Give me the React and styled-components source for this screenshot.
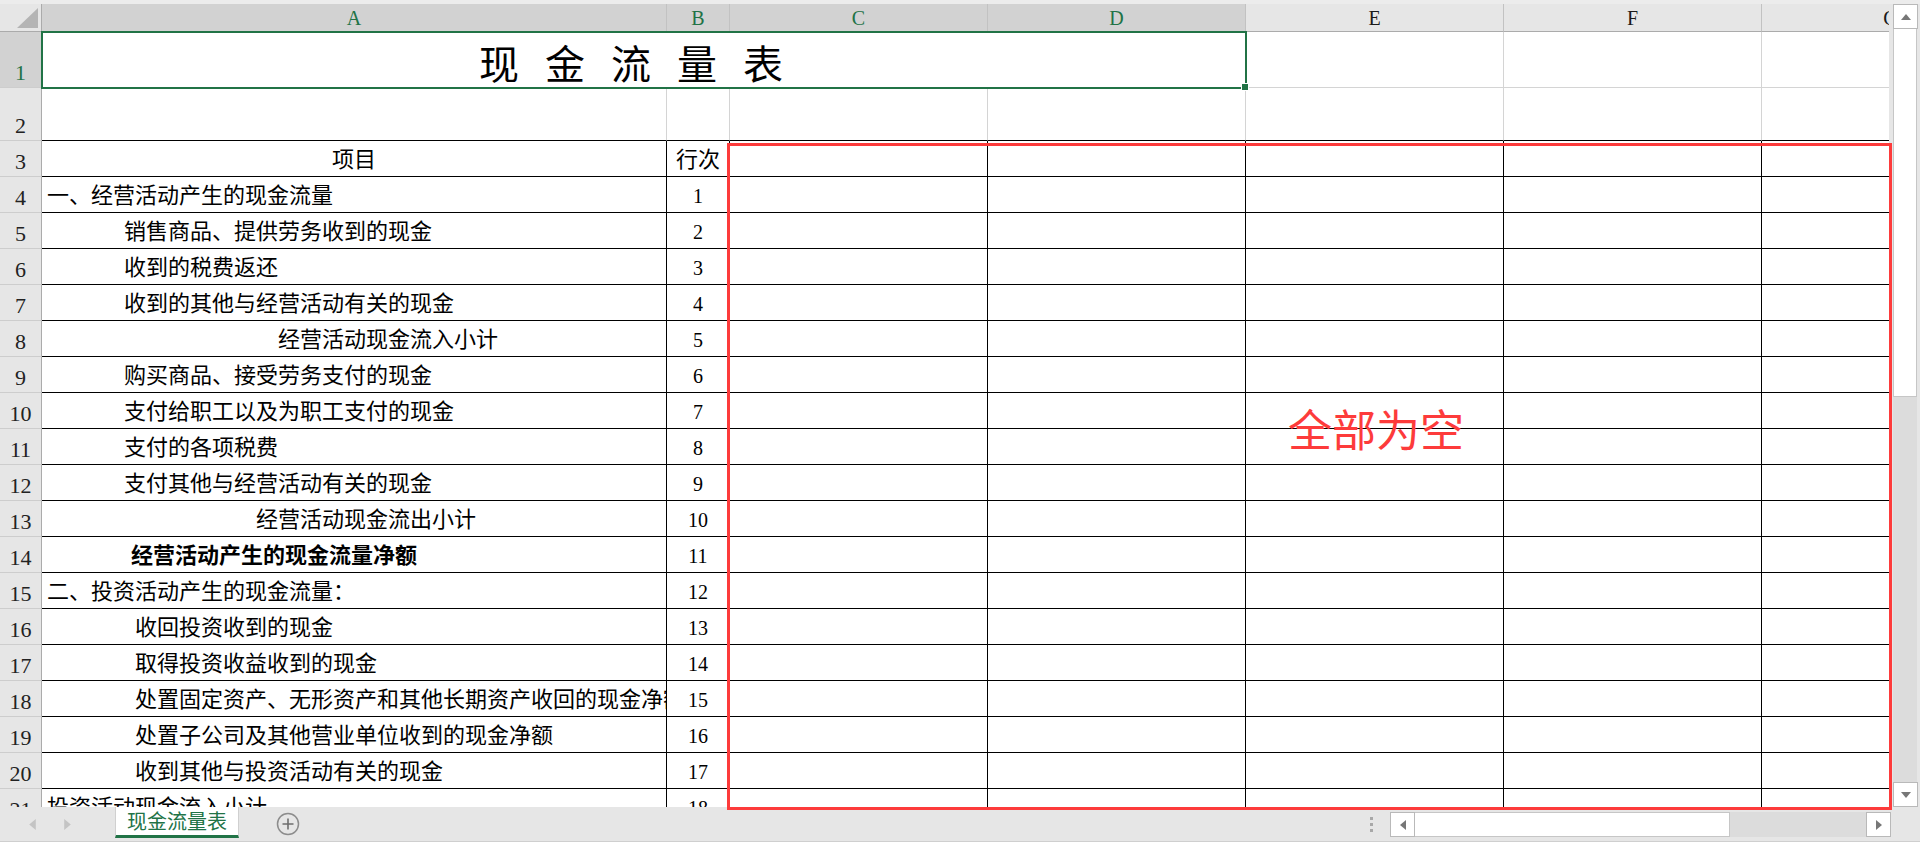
import React from 'react';
import styled, { createGlobalStyle } from 'styled-components';

const GREEN = '#217346';
const RED = '#fd3b3b';
const GRID = '#d4d4d4';

const GlobalStyle = createGlobalStyle`
  html, body {
    margin: 0;
    padding: 0;
    background: #ffffff;
    overflow: hidden;
  }
  body {
    font-family: "Liberation Serif", "Noto Sans CJK SC", serif;
  }
`;

const Page = styled.div`
  position: relative;
  width: 1920px;
  height: 842px;
  display: flex;
  flex-direction: column;
  background: #e6e6e6;
  overflow: hidden;
`;

const TopStrip = styled.div`
  flex: none;
  height: 4px;
  background: #ececec;
`;

const Main = styled.div`
  flex: none;
  display: flex;
  height: 803px;
`;

const Viewport = styled.div`
  flex: none;
  width: 1889px;
  height: 100%;
  overflow: hidden;
  background: #ffffff;
`;

const Sheet = styled.div`
  display: grid;
  grid-template-columns: 42px 625px 63px 258px 258px 258px 258px 258px;
  grid-template-rows: 28px 56px 53px repeat(19, 36px);
`;

const Corner = styled.div`
  position: relative;
  background: #e6e6e6;
  border-right: 1px solid #ababab;
  border-bottom: 1px solid #ababab;
  box-sizing: border-box;

  &::after {
    content: '';
    position: absolute;
    right: 3px;
    bottom: 3px;
    width: 0;
    height: 0;
    border-left: 21px solid transparent;
    border-bottom: 20px solid #b4b4b4;
  }
`;

const ColHead = styled.div`
  display: flex;
  align-items: flex-end;
  justify-content: center;
  padding-bottom: 3px;
  box-sizing: border-box;
  background: ${({ $selected }) => ($selected ? '#d2d2d2' : '#e6e6e6')};
  color: ${({ $selected }) => ($selected ? GREEN : '#1a1a1a')};
  border-right: 1px solid #c2c2c2;
  border-bottom: 1px solid #ababab;
  font-family: "Liberation Serif", serif;
  font-size: 20px;
  line-height: 1;
`;

const RowHead = styled.div`
  display: flex;
  align-items: flex-end;
  justify-content: center;
  padding-bottom: 3px;
  box-sizing: border-box;
  background: ${({ $selected }) => ($selected ? '#d2d2d2' : '#e6e6e6')};
  color: ${({ $selected }) => ($selected ? GREEN : '#222222')};
  border-right: 1px solid #ababab;
  border-bottom: 1px solid #cdcdcd;
  font-family: "Liberation Serif", serif;
  font-size: 22px;
  line-height: 1;
`;

const Cell = styled.div`
  display: flex;
  align-items: center;
  justify-content: ${({ $align }) => $align || 'flex-start'};
  padding-left: ${({ $indent }) => ($indent ? `${$indent}px` : '0')};
  padding-top: 3px;
  box-sizing: border-box;
  min-width: 0;
  overflow: hidden;
  white-space: nowrap;
  border-right: 1px solid ${({ $right }) => $right || '#000000'};
  border-bottom: 1px solid ${({ $bottom }) => $bottom || '#000000'};
  color: #000000;
  font-size: ${({ $size }) => $size || 22}px;
  font-weight: ${({ $bold }) => ($bold ? 700 : 400)};
  line-height: 1;
`;

const TitleCell = styled.div`
  grid-column: span 4;
  display: flex;
  align-items: center;
  justify-content: center;
  padding-top: 4px;
  box-sizing: border-box;
  border-bottom: 1px solid ${GRID};
  font-family: "Noto Sans CJK SC", sans-serif;
  font-size: 40px;
  letter-spacing: 26px;
  line-height: 1;
  color: #000000;
`;

const VScroll = styled.div`
  flex: none;
  width: 31px;
  display: flex;
  flex-direction: column;
  padding: 0 3px 0 4px;
  box-sizing: border-box;
`;

const ScrollBtn = styled.div`
  flex: none;
  width: 25px;
  height: 25px;
  display: flex;
  align-items: center;
  justify-content: center;
  background: #ffffff;
  border: 1px solid #b9b9b9;
  box-sizing: border-box;
`;

const VThumb = styled.div`
  flex: none;
  height: 368px;
  background: #ffffff;
  border: 1px solid #c6c6c6;
  border-top: none;
  box-sizing: border-box;
`;

const VTrack = styled.div`
  flex: 1;
  background: #dcdcdc;
`;

const BottomBar = styled.div`
  flex: none;
  height: 35px;
  display: flex;
  align-items: flex-start;
  box-sizing: border-box;
  border-bottom: 1px solid #cfcfcf;
`;

const NavGroup = styled.div`
  width: 115px;
  height: 34px;
  display: flex;
  align-items: center;
  gap: 26px;
  padding-left: 28px;
  box-sizing: border-box;
`;

const SheetTab = styled.div`
  width: 124px;
  height: 31px;
  display: flex;
  align-items: center;
  justify-content: center;
  background: #ffffff;
  border-left: 1px solid #d0d0d0;
  border-right: 1px solid #d0d0d0;
  border-bottom: 3px solid ${GREEN};
  box-sizing: border-box;
  color: ${GREEN};
  font-family: "Noto Sans CJK SC", sans-serif;
  font-size: 20px;
  line-height: 1;
`;

const AddSheet = styled.div`
  margin-left: 37px;
  height: 34px;
  display: flex;
  align-items: center;
`;

const Spacer = styled.div`
  flex: 1;
`;

const Dots = styled.div`
  height: 34px;
  display: flex;
  flex-direction: column;
  justify-content: center;
  gap: 3px;
  margin-right: 17px;

  span {
    width: 3px;
    height: 3px;
    background: #a8a8a8;
  }
`;

const HScroll = styled.div`
  display: flex;
  width: 501px;
  height: 25px;
  margin-top: 5px;
  margin-right: 29px;
`;

const HThumb = styled.div`
  width: 315px;
  background: #ffffff;
  border: 1px solid #c6c6c6;
  border-left: none;
  box-sizing: border-box;
`;

const HTrack = styled.div`
  flex: 1;
  background: #dcdcdc;
`;

const Selection = styled.div`
  position: absolute;
  left: 41px;
  top: 31px;
  width: 1206px;
  height: 58px;
  border: 2px solid ${GREEN};
  box-sizing: border-box;
  pointer-events: none;
`;

const FillHandle = styled.div`
  position: absolute;
  left: 1241px;
  top: 83px;
  width: 6px;
  height: 6px;
  background: ${GREEN};
  border: 1px solid #ffffff;
`;

const Highlight = styled.div`
  position: absolute;
  left: 727px;
  top: 143px;
  width: 1165px;
  height: 667px;
  border: 3px solid ${RED};
  box-sizing: border-box;
  pointer-events: none;
`;

const Note = styled.div`
  position: absolute;
  left: 1288px;
  top: 406px;
  color: ${RED};
  font-family: "Noto Sans CJK SC", sans-serif;
  font-size: 44px;
  line-height: 1;
  white-space: nowrap;
`;

const columns = ['A', 'B', 'C', 'D', 'E', 'F', 'G'];

const rows = [
  { text: '一、经营活动产生的现金流量', indent: 5 },
  { text: '销售商品、提供劳务收到的现金', indent: 82 },
  { text: '收到的税费返还', indent: 82 },
  { text: '收到的其他与经营活动有关的现金', indent: 82 },
  { text: '经营活动现金流入小计', indent: 236 },
  { text: '购买商品、接受劳务支付的现金', indent: 82 },
  { text: '支付给职工以及为职工支付的现金', indent: 82 },
  { text: '支付的各项税费', indent: 82 },
  { text: '支付其他与经营活动有关的现金', indent: 82 },
  { text: '经营活动现金流出小计', indent: 214 },
  { text: '经营活动产生的现金流量净额', indent: 89, bold: true },
  { text: '二、投资活动产生的现金流量：', indent: 5 },
  { text: '收回投资收到的现金', indent: 93 },
  { text: '取得投资收益收到的现金', indent: 93 },
  { text: '处置固定资产、无形资产和其他长期资产收回的现金净额', indent: 93 },
  { text: '处置子公司及其他营业单位收到的现金净额', indent: 93 },
  { text: '收到其他与投资活动有关的现金', indent: 93 },
  { text: '投资活动现金流入小计', indent: 5 },
];

function Triangle({ dir, color = '#777777', size = 8 }) {
  const pts = {
    up: '0,7 5,1 10,7',
    down: '0,1 5,7 10,1',
    left: '7,0 1,5 7,10',
    right: '1,0 7,5 1,10',
  }[dir];
  const vertical = dir === 'up' || dir === 'down';
  return (
    <svg
      width={vertical ? size + 2 : size}
      height={vertical ? size : size + 2}
      viewBox={vertical ? '0 0 10 8' : '0 0 8 10'}
    >
      <polygon points={pts} fill={color} />
    </svg>
  );
}

function App() {
  return (
    <>
      <GlobalStyle />
      <Page>
        <TopStrip />
        <Main>
          <Viewport>
            <Sheet>
              <Corner />
              {columns.map((c, i) => (
                <ColHead key={c} $selected={i < 4}>
                  {c}
                </ColHead>
              ))}

              <RowHead $selected>1</RowHead>
              <TitleCell>现金流量表</TitleCell>
              <Cell $right={GRID} $bottom={GRID} />
              <Cell $right={GRID} $bottom={GRID} />
              <Cell $right={GRID} $bottom={GRID} />

              <RowHead>2</RowHead>
              {columns.map((c) => (
                <Cell key={c} $right={GRID} />
              ))}

              <RowHead>3</RowHead>
              <Cell $align="center">项目</Cell>
              <Cell $align="center">行次</Cell>
              {columns.slice(2).map((c) => (
                <Cell key={c} />
              ))}

              {rows.map((r, i) => (
                <React.Fragment key={i}>
                  <RowHead>{i + 4}</RowHead>
                  <Cell $indent={r.indent} $bold={r.bold}>
                    {r.text}
                  </Cell>
                  <Cell $align="center" $size={20}>
                    {i + 1}
                  </Cell>
                  {columns.slice(2).map((c) => (
                    <Cell key={c} />
                  ))}
                </React.Fragment>
              ))}
            </Sheet>
          </Viewport>
          <VScroll>
            <ScrollBtn>
              <Triangle dir="up" />
            </ScrollBtn>
            <VThumb />
            <VTrack />
            <ScrollBtn>
              <Triangle dir="down" />
            </ScrollBtn>
          </VScroll>
        </Main>
        <BottomBar>
          <NavGroup>
            <Triangle dir="left" color="#c4c4c4" size={9} />
            <Triangle dir="right" color="#c4c4c4" size={9} />
          </NavGroup>
          <SheetTab>现金流量表</SheetTab>
          <AddSheet>
            <svg width="24" height="24" viewBox="0 0 24 24">
              <circle cx="12" cy="12" r="10.5" fill="none" stroke="#8c8c8c" strokeWidth="1.5" />
              <path d="M12 6.5v11M6.5 12h11" stroke="#6e6e6e" strokeWidth="1.6" />
            </svg>
          </AddSheet>
          <Spacer />
          <Dots>
            <span />
            <span />
            <span />
          </Dots>
          <HScroll>
            <ScrollBtn>
              <Triangle dir="left" />
            </ScrollBtn>
            <HThumb />
            <HTrack />
            <ScrollBtn>
              <Triangle dir="right" />
            </ScrollBtn>
          </HScroll>
        </BottomBar>
        <Selection />
        <FillHandle />
        <Highlight />
        <Note>全部为空</Note>
      </Page>
    </>
  );
}

export default App;
